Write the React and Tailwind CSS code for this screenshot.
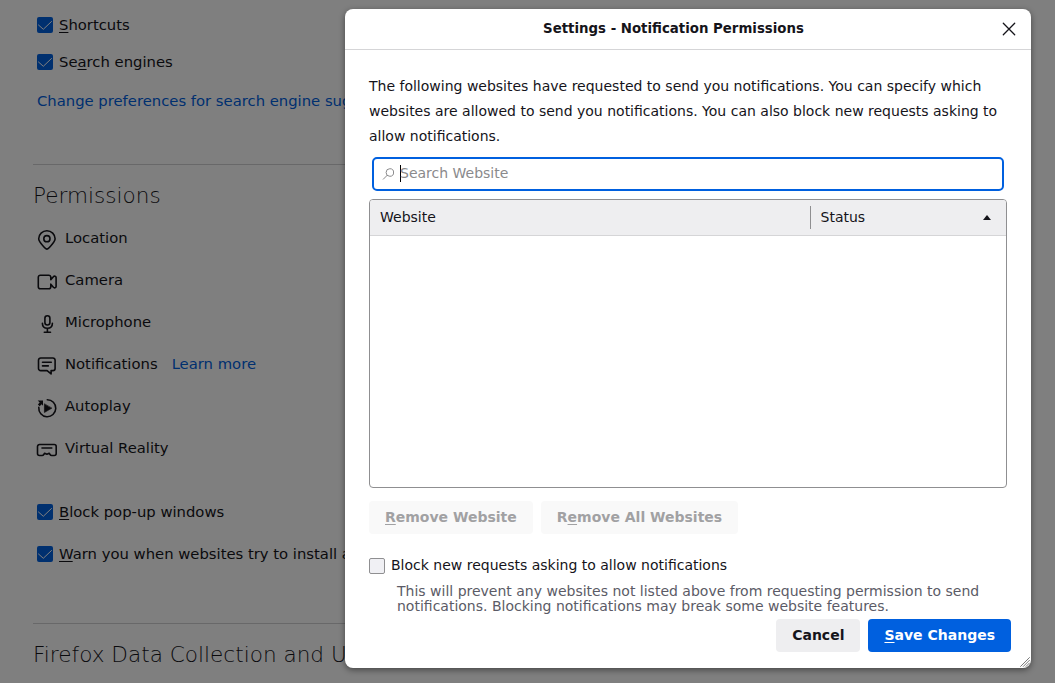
import React from "react";

function CheckedBox() {
  return (
    <span className="flex size-4 shrink-0 items-center justify-center rounded-xs bg-[#0060df]">
      <svg className="size-4" viewBox="0 0 16 16" fill="none" stroke="#fff" strokeWidth="1" strokeLinecap="round" strokeLinejoin="round">
        <path d="M1.500 8 6.300 12.300 14.500 4.500" />
      </svg>
    </span>
  );
}

function CheckRow({ before = "", accessKey, after, className }) {
  return (
    <div className={`flex h-5 items-center pl-[37px] ${className}`}>
      <CheckedBox />
      <span className="ml-1.5 whitespace-nowrap">
        {before}
        <u className="underline-offset-2">{accessKey}</u>
        {after}
      </span>
    </div>
  );
}

function Icon({ children }) {
  return (
    <svg className="mt-0.5 size-5 shrink-0 overflow-visible" viewBox="0 0 20 20" fill="none" stroke="currentColor" strokeWidth="1.6" strokeLinecap="round" strokeLinejoin="round">
      {children}
    </svg>
  );
}

const permissions = [
  {
    label: "Location",
    icon: (
      <>
        <path d="M9.900 19.100c-.7 0-1.300-.4-1.900-1.100C5.100 14.700 1.700 12 1.700 8.800a8.200 8 0 0 1 16.400 0c0 3.200-3.400 5.900-6.300 9.200-.6.7-1.200 1.100-1.900 1.100Z" />
        <circle cx="9.900" cy="8.700" r="3.100" />
      </>
    ),
  },
  {
    label: "Camera",
    icon: (
      <path d="M3.300 3.200h8.500a2 2 0 0 1 2 2v2.600l2.600-3.100c.9-1 2.700-.5 2.700.9v8.800c0 1.400-1.800 1.900-2.700.9l-2.600-3.100v2.600a2 2 0 0 1-2 2H3.300a2 2 0 0 1-2-2V5.200a2 2 0 0 1 2-2Z" />
    ),
  },
  {
    label: "Microphone",
    icon: (
      <>
        <rect x="7.900" y="1.700" width="5" height="9.300" rx="2.500" />
        <path d="M5.400 9.200c0 3 2 5 5 5s5-2 5-5M10.400 14.200v4M7.300 18.200h6.200" />
      </>
    ),
  },
  {
    label: "Notifications",
    link: "Learn more",
    icon: (
      <>
        <path d="M3.700 2h12.200a2.200 2.200 0 0 1 2.200 2.200v8.200a2.200 2.200 0 0 1-2.200 2.200h-1.800v3.300l-4-3.300H3.700a2.200 2.200 0 0 1-2.200-2.200V4.200A2.200 2.200 0 0 1 3.700 2Z" />
        <path d="M5.500 6.300h8.800M5.500 9.900h5.800" />
      </>
    ),
  },
  {
    label: "Autoplay",
    icon: (
      <>
        <path d="M10.300 1.700a8.500 8.500 0 1 1-8.500 7.700" />
        <path d="M.700 2.400h5.300v5.300L4.600 6.200 2.700 8.200.900 6.500 2.700 4.400Z" fill="currentColor" stroke="none" />
        <path d="M7.400 6.100v8.400l7.200-4.200z" fill="currentColor" strokeWidth="0.6" />
      </>
    ),
  },
  {
    label: "Virtual Reality",
    icon: (
      <>
        <path d="M2.500 4.500h14.700a2 2 0 0 1 2 2v7a2 2 0 0 1-2 2h-2.500c-.8 0-1.300-.4-1.700-1l-.8-1.200-2.300 1-2.300-1-.8 1.200c-.4.600-.9 1-1.700 1H2.500a2 2 0 0 1-2-2v-7a2 2 0 0 1 2-2Z" />
        <path d="M5 8h9.800" />
      </>
    ),
  },
];

function SettingsPage() {
  return (
    <main className="mr-12 h-full bg-white text-[14.8px] leading-5 text-[#15141a]">
      <CheckRow accessKey="S" after="hortcuts" className="mt-[15px]" />
      <CheckRow before="Se" accessKey="a" after="rch engines" className="mt-[17px]" />
      <a className="mt-[19px] block whitespace-nowrap pl-[37px] text-[#0060df]">Change preferences for search engine suggestions</a>
      <hr className="ml-[33px] mt-[53px] border-[#d0d0d2]" />
      <h2 className="ml-[33px] mt-[15px] text-[21.6px] leading-8 font-light">Permissions</h2>
      <ul className="mt-4 flex flex-col gap-5">
        {permissions.map(({ label, icon, link }) => (
          <li key={label} className="flex h-[22px] pl-[37px]">
            <Icon>{icon}</Icon>
            <span className="ml-2">{label}</span>
            {link && <a className="ml-3.5 text-[#0060df]">{link}</a>}
          </li>
        ))}
      </ul>
      <CheckRow accessKey="B" after="lock pop-up windows" className="mt-[42px]" />
      <CheckRow accessKey="W" after="arn you when websites try to install add-ons" className="mt-[22px]" />
      <hr className="ml-[33px] mt-[59px] border-[#d0d0d2]" />
      <h2 className="ml-[33px] mt-[15px] whitespace-nowrap text-[21.6px] leading-8 font-light">Firefox Data Collection and Use</h2>
    </main>
  );
}

function Dialog() {
  return (
    <section className="mr-6 mt-[9px] flex h-[659px] w-[686px] flex-col rounded-lg bg-white text-sm text-[#15141a] shadow-[0_2px_6px_rgba(0,0,0,0.45)]">
      <header className="flex h-[41px] shrink-0 items-center border-b border-[#d5d5d7] pr-[15px]">
        <h1 className="flex-1 pb-px text-center text-[13.33px] leading-5 font-bold">Settings - Notification Permissions</h1>
        <svg className="size-3.5" viewBox="0 0 14 14" fill="none" stroke="currentColor" strokeWidth="1.3" strokeLinecap="round">
          <path d="M1.300 1.300 12.700 12.700M12.700 1.300 1.300 12.700" />
        </svg>
      </header>
      <div className="flex flex-1 flex-col px-6 pt-6">
        <p className="whitespace-nowrap leading-[25px]">
          The following websites have requested to send you notifications. You can specify which
          <br />
          websites are allowed to send you notifications. You can also block new requests asking to
          <br />
          allow notifications.
        </p>
        <div className="mx-[3px] mt-2 flex h-[34px] shrink-0 items-center rounded-[5px] border-2 border-[#0060df] pl-2">
          <svg className="mb-px size-3" viewBox="0 0 12 12" fill="none" stroke="#8a8a8c" strokeWidth="1" strokeLinecap="round">
            <circle cx="7.900" cy="4.500" r="3.800" />
            <path d="M5.200 7.300 1.300 11.200" />
          </svg>
          <span className="mb-px ml-1.5 h-[17px] w-px bg-black" />
          <span className="-ml-px pb-0.5 text-[#8a8a8c]">Search Website</span>
        </div>
        <div className="mt-2 flex h-[289px] shrink-0 flex-col overflow-hidden rounded-sm border border-[#8f8f91]">
          <div className="flex h-9 items-center border-b border-[#d5d5d7] bg-[#eeeef0]">
            <span className="w-[440px] pb-0.5 pl-2.5">Website</span>
            <span className="h-[23px] w-px bg-[#8f8f91]" />
            <span className="flex-1 pb-0.5 pl-[9.5px]">Status</span>
            <svg className="mr-[15px] h-[5px] w-2" viewBox="0 0 9 5" preserveAspectRatio="none" fill="currentColor">
              <path d="M4.500 0 9 5H0z" />
            </svg>
          </div>
        </div>
        <div className="mt-[13px] flex gap-2 font-bold">
          <button className="h-[33px] rounded-sm bg-[#f9f9f9] px-4 pb-0.5 text-[#a1a1a3]"><u className="underline-offset-2">R</u>emove Website</button>
          <button className="h-[33px] rounded-sm bg-[#f9f9f9] px-4 pb-0.5 text-[#a1a1a3]">R<u className="underline-offset-2">e</u>move All Websites</button>
        </div>
        <label className="mt-[21px] flex h-5 items-center">
          <span className="mt-0.5 size-4 rounded-xs border border-[#8f8f91] bg-[#f0f0f4]" />
          <span className="ml-1.5">Block new requests asking to allow notifications</span>
        </label>
        <p className="mt-[9px] ml-7 whitespace-nowrap leading-[15px] text-[#5b5b66]">
          This will prevent any websites not listed above from requesting permission to send
          <br />
          notifications. Blocking notifications may break some website features.
        </p>
        <div className="-mr-1 mt-[5px] flex justify-end gap-2 font-bold">
          <button className="h-[33px] rounded-sm bg-[#eeeef0] px-4 pb-0.5">Cancel</button>
          <button className="h-[33px] rounded-sm bg-[#0060df] px-4 pb-0.5 text-white"><u className="underline-offset-2">S</u>ave Changes</button>
        </div>
      </div>
      <svg className="-mt-[11px] mr-px mb-px size-[10px] shrink-0 self-end" viewBox="0 0 11 11" fill="none" stroke="#6b6b6b" strokeWidth="1">
        <path d="M.300 10.700 10.700.300M3.300 10.700 10.700 3.300M6.300 10.700 10.700 6.300M9 10.700 10.700 9" />
      </svg>
    </section>
  );
}

export default function App() {
  return (
    <div className="grid h-[683px] w-[1055px] overflow-hidden font-['DejaVu_Sans',sans-serif]">
      <div className="col-start-1 row-start-1 flow-root h-[683px] overflow-hidden bg-white">
        <SettingsPage />
      </div>
      <div className="z-10 col-start-1 row-start-1 flex items-start justify-end bg-black/50">
        <Dialog />
      </div>
    </div>
  );
}
